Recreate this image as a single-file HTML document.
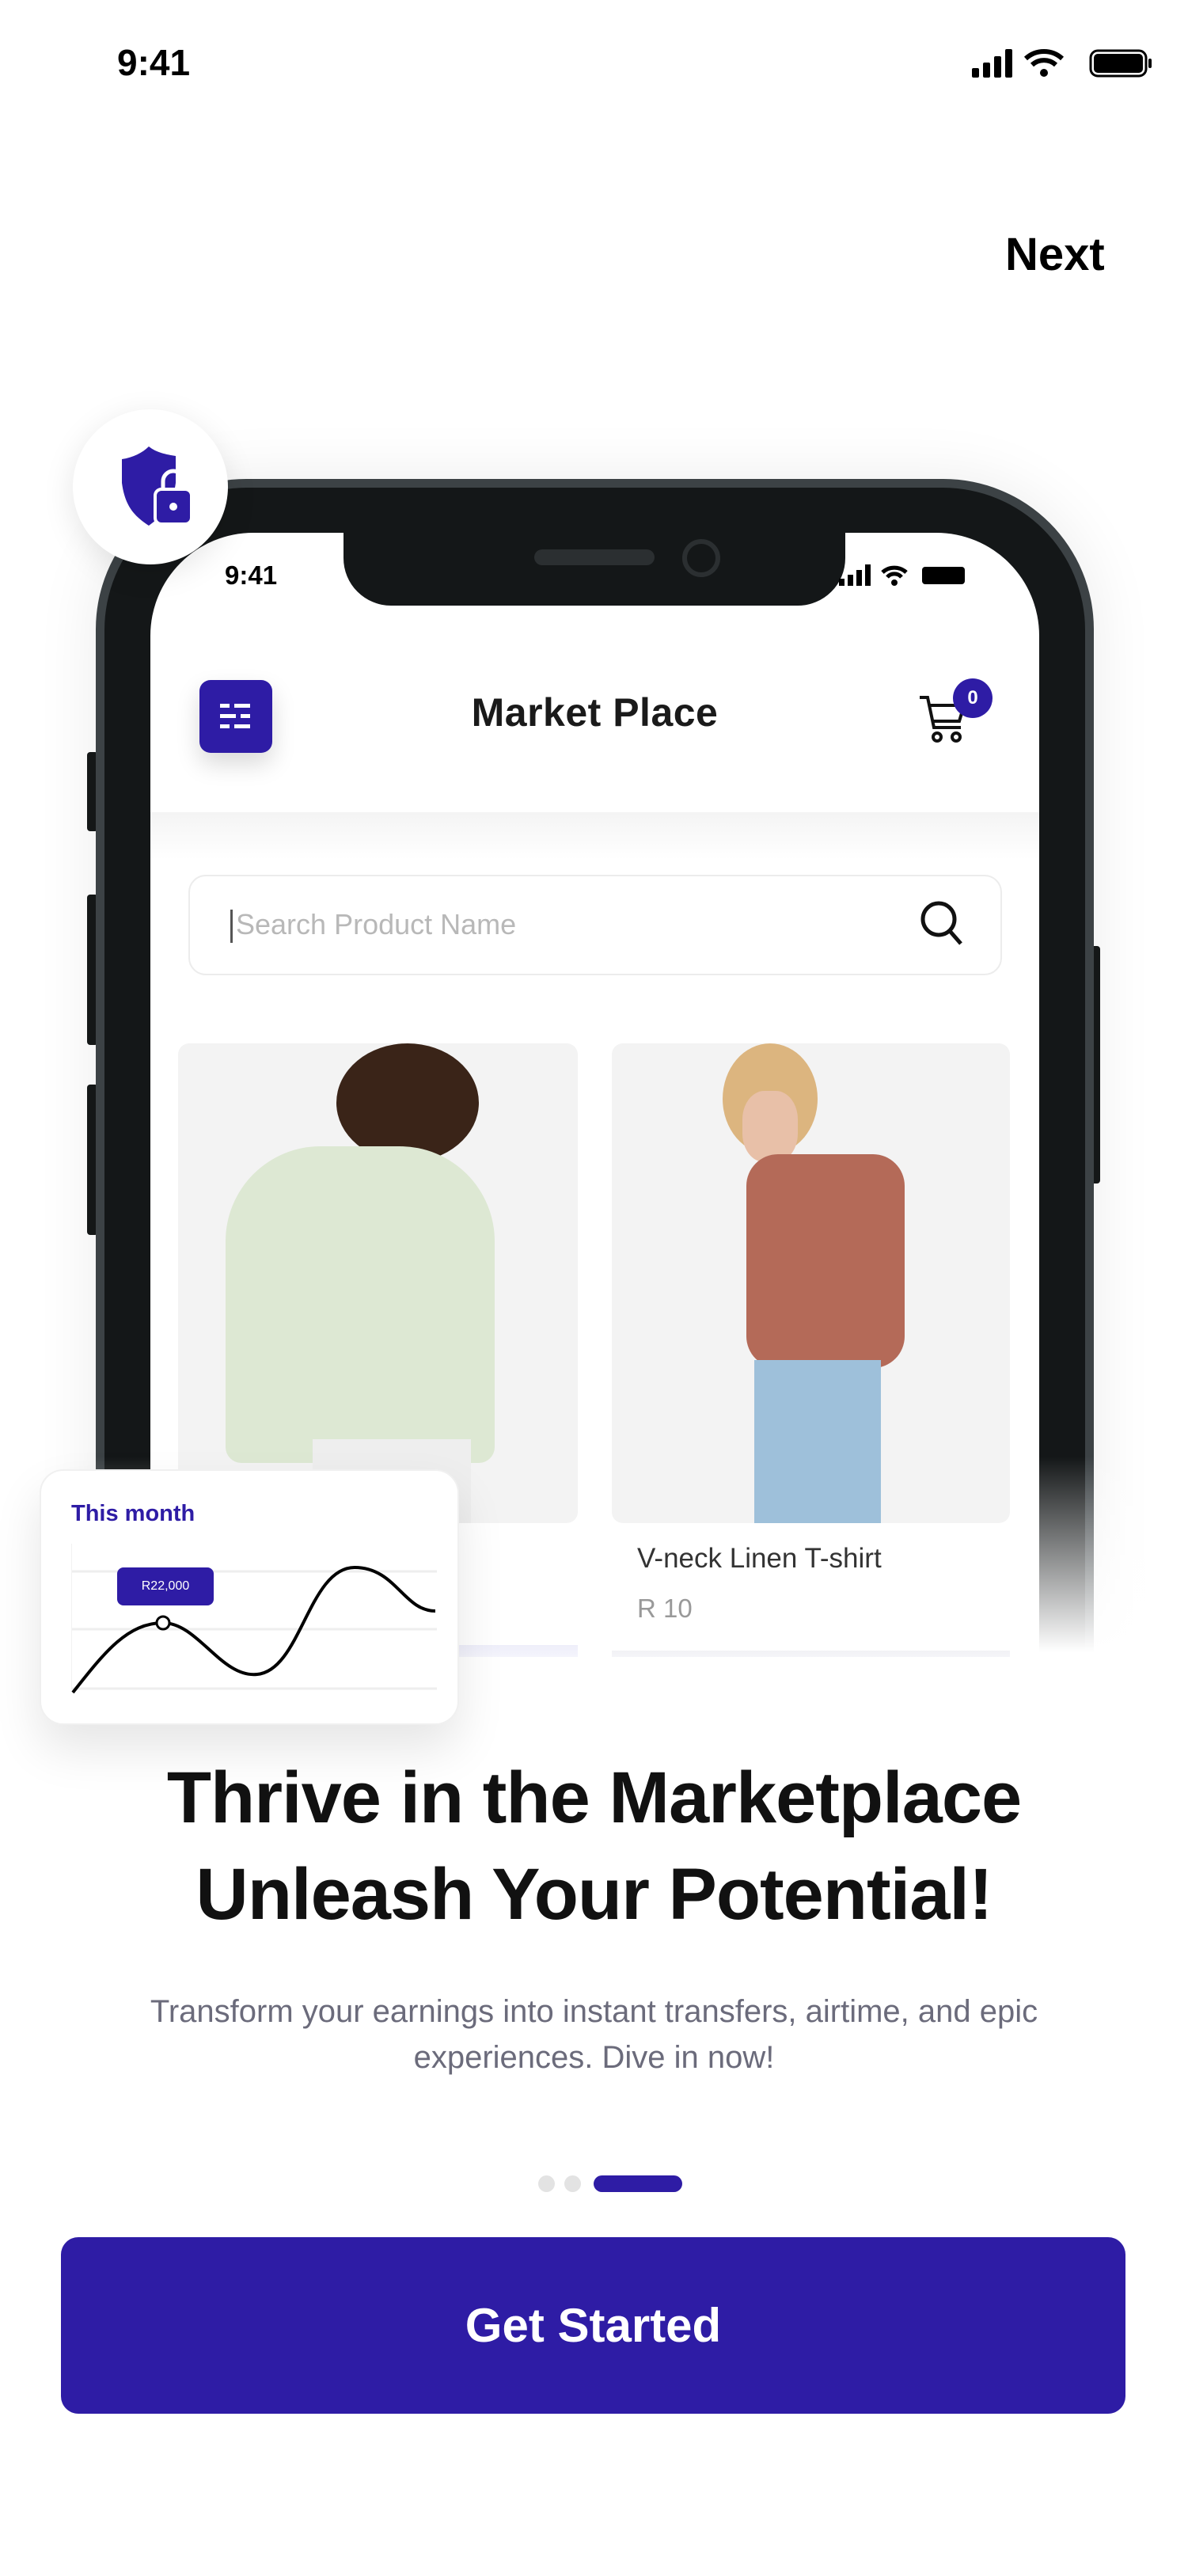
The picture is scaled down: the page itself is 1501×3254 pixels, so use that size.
<!DOCTYPE html>
<html><head><meta charset="utf-8">
<style>
*{margin:0;padding:0;box-sizing:border-box}
body{width:1501px;height:3254px;background:#fff;position:relative;overflow:hidden;font-family:"Liberation Sans",sans-serif}
.abs{position:absolute}
</style></head><body>
<!-- status bar -->
<div class="abs" style="left:148px;top:52px;font-size:46px;font-weight:bold;color:#000">9:41</div>
<svg class="abs" style="left:1228px;top:58px" width="236" height="44" viewBox="0 0 236 44">
<rect x="0" y="28" width="9" height="12" rx="2"/><rect x="14" y="21" width="9" height="19" rx="2"/><rect x="28" y="13" width="9" height="27" rx="2"/><rect x="42" y="4" width="9" height="36" rx="2"/>
<path d="M68 16 a34 34 0 0 1 46 0" stroke="#000" stroke-width="6" fill="none"/><path d="M76 24 a22 22 0 0 1 30 0" stroke="#000" stroke-width="6" fill="none"/><circle cx="91" cy="34" r="5"/>
<rect x="150" y="6" width="70" height="32" rx="9" stroke="#000" stroke-width="3" fill="none"/><rect x="154" y="10" width="62" height="24" rx="5"/><rect x="223" y="16" width="4" height="12" rx="2"/>
</svg>
<div class="abs" style="left:1270px;top:288px;font-size:58px;font-weight:bold;color:#000">Next</div>

<!-- phone -->
<div class="abs" style="left:110px;top:950px;width:14px;height:100px;background:#151818;border-radius:4px"></div>
<div class="abs" style="left:110px;top:1130px;width:14px;height:190px;background:#151818;border-radius:4px"></div>
<div class="abs" style="left:110px;top:1370px;width:14px;height:190px;background:#151818;border-radius:4px"></div>
<div class="abs" style="left:1376px;top:1195px;width:14px;height:300px;background:#151818;border-radius:4px"></div>
<div class="abs" style="left:121px;top:605px;width:1261px;height:1700px;background:#3c4245;border-radius:190px 190px 0 0;box-shadow:0 0 80px rgba(0,0,0,0.08)"></div>
<div class="abs" style="left:132px;top:616px;width:1239px;height:1700px;background:#141718;border-radius:180px 180px 0 0"></div>
<!-- bezel fade -->
<div class="abs" style="left:60px;top:1840px;width:1400px;height:260px;background:linear-gradient(rgba(255,255,255,0),#fff 95%)"></div>
<div class="abs" style="left:0;top:2095px;width:1501px;height:300px;background:#fff"></div>
<div class="abs" style="left:190px;top:673px;width:1123px;height:1420px;background:#fff;border-radius:130px 130px 0 0;overflow:hidden">
  <div class="abs" style="left:244px;top:-10px;width:634px;height:102px;background:#141718;border-radius:0 0 60px 60px"></div>
  <div class="abs" style="left:485px;top:21px;width:152px;height:20px;background:#2b2f31;border-radius:10px"></div>
  <div class="abs" style="left:672px;top:8px;width:48px;height:48px;border:6px solid #2b2f31;border-radius:50%"></div>
  <div class="abs" style="left:94px;top:35px;font-size:33px;font-weight:bold;color:#000">9:41</div>
  <svg class="abs" style="left:870px;top:40px" width="170" height="30" viewBox="0 0 170 30"><rect x="0" y="18" width="7" height="9"/><rect x="11" y="13" width="7" height="14"/><rect x="22" y="7" width="7" height="20"/><rect x="33" y="0" width="7" height="27"/>
  <path d="M55 10 a22 22 0 0 1 30 0" stroke="#000" stroke-width="5" fill="none"/><path d="M61 16 a12 12 0 0 1 18 0" stroke="#000" stroke-width="5" fill="none"/><circle cx="70" cy="23" r="4"/>
  <rect x="105" y="3" width="54" height="22" rx="4"/></svg>
  <!-- header -->
  <div class="abs" style="left:62px;top:186px;width:92px;height:92px;background:#2e1ca5;border-radius:14px;box-shadow:0 14px 30px rgba(0,0,0,0.15)"></div>
  <svg class="abs" style="left:88px;top:214px" width="40" height="36"><rect x="0" y="2" width="12" height="5" fill="#fff"/><rect x="18" y="2" width="20" height="5" fill="#fff"/><rect x="0" y="15" width="20" height="5" fill="#fff"/><rect x="26" y="15" width="12" height="5" fill="#fff"/><rect x="0" y="28" width="12" height="5" fill="#fff"/><rect x="18" y="28" width="20" height="5" fill="#fff"/></svg>
  <div class="abs" style="left:0;width:1123px;top:198px;text-align:center;font-size:50px;font-weight:bold;color:#1a1a1a;letter-spacing:0.5px">Market Place</div>
  <svg class="abs" style="left:970px;top:200px" width="70" height="70" viewBox="0 0 70 70" fill="none" stroke="#111" stroke-width="4"><path d="M2 8 h10 l8 38 h34"/><path d="M14 18 h44 l-6 20 h-34"/><circle cx="24" cy="58" r="5"/><circle cx="48" cy="58" r="5"/></svg>
  <div class="abs" style="left:1014px;top:184px;width:50px;height:50px;background:#2e1ca5;border-radius:50%;color:#fff;font-size:24px;font-weight:bold;text-align:center;line-height:50px">0</div>
  <div class="abs" style="left:0;top:353px;width:1123px;height:60px;background:linear-gradient(#f4f4f4,#fff)"></div>
  <!-- search -->
  <div class="abs" style="left:48px;top:432px;width:1028px;height:127px;border:2px solid #ececec;border-radius:22px"></div>
  <div class="abs" style="left:101px;top:476px;width:3px;height:42px;background:#555"></div>
  <div class="abs" style="left:108px;top:474px;font-size:36px;color:#b8b8b8">Search Product Name</div>
  <svg class="abs" style="left:970px;top:462px" width="60" height="64" fill="none" stroke="#111" stroke-width="5"><circle cx="26" cy="26" r="20"/><path d="M40 41 l14 16"/></svg>
  <!-- cards -->
  <div class="abs" style="left:35px;top:645px;width:505px;height:606px;background:#f3f3f3;border-radius:14px;overflow:hidden">
    <div class="abs" style="left:200px;top:0;width:180px;height:150px;background:#3a2418;border-radius:50%"></div>
    <div class="abs" style="left:60px;top:130px;width:340px;height:400px;background:#dde8d3;border-radius:120px 120px 20px 20px"></div>
    <div class="abs" style="left:170px;top:500px;width:200px;height:120px;background:#eee"></div>
  </div>
  <div class="abs" style="left:583px;top:645px;width:503px;height:606px;background:#f3f3f3;border-radius:14px;overflow:hidden">
    <div class="abs" style="left:140px;top:0;width:120px;height:140px;background:#dcb57f;border-radius:50%"></div>
    <div class="abs" style="left:165px;top:60px;width:70px;height:90px;background:#e8c0a8;border-radius:40%"></div>
    <div class="abs" style="left:170px;top:140px;width:200px;height:270px;background:#b46a58;border-radius:40px"></div>
    <div class="abs" style="left:180px;top:400px;width:160px;height:210px;background:#9ec0da"></div>
  </div>
  <div class="abs" style="left:615px;top:1276px;font-size:35px;color:#333">V-neck Linen T-shirt</div>
  <div class="abs" style="left:615px;top:1340px;font-size:33px;color:#999">R 10</div>
  <div class="abs" style="left:35px;top:1405px;width:505px;height:40px;background:linear-gradient(#eeeefa,#fff)"></div>
  <div class="abs" style="left:583px;top:1412px;width:503px;height:40px;background:linear-gradient(#f2f2f6,#fff)"></div>
</div>

<!-- shield -->
<div class="abs" style="left:92px;top:517px;width:196px;height:196px;background:#fff;border-radius:50%;box-shadow:0 10px 40px rgba(0,0,0,0.10)"></div>
<svg class="abs" style="left:140px;top:560px" width="110" height="110" viewBox="0 0 110 110">
<path d="M48 4 C58 12 70 14 82 16 V50 C78 80 64 92 48 104 C30 92 18 80 14 50 V20 C28 18 40 12 48 4Z" fill="#2e1ca5"/>
<rect x="56" y="58" width="46" height="44" rx="8" fill="#2e1ca5" stroke="#fff" stroke-width="4"/>
<path d="M66 60 V48 a13 13 0 0 1 26 0 V60" fill="none" stroke="#fff" stroke-width="5"/>
<circle cx="79" cy="80" r="5" fill="#fff"/>
</svg>

<!-- chart card -->
<div class="abs" style="left:50px;top:1856px;width:530px;height:323px;background:#fff;border-radius:30px;border:2px solid #f0f0f0;box-shadow:0 30px 60px rgba(0,0,0,0.10)"></div>
<div class="abs" style="left:90px;top:1896px;font-size:29px;font-weight:bold;color:#2e1ca5">This month</div>
<svg class="abs" style="left:90px;top:1940px" width="470" height="220" viewBox="0 0 470 220">
<line x1="0" y1="45" x2="462" y2="45" stroke="#eee" stroke-width="3"/><line x1="0" y1="118" x2="462" y2="118" stroke="#eee" stroke-width="3"/><line x1="0" y1="193" x2="462" y2="193" stroke="#eee" stroke-width="3"/>
<line x1="0" y1="10" x2="0" y2="193" stroke="#f2f2f2" stroke-width="2"/>
<path d="M2 198 C40 150 70 110 116 110 C160 110 190 180 235 175 C290 170 300 40 358 40 C410 40 420 95 460 95" stroke="#000" stroke-width="4" fill="none"/>
<circle cx="116" cy="110" r="8" fill="#fff" stroke="#000" stroke-width="3"/>
</svg>
<div class="abs" style="left:148px;top:1980px;width:122px;height:48px;background:#2e1ca5;border-radius:8px;color:#fff;font-size:16px;text-align:center;line-height:48px">R22,000</div>

<!-- text -->
<div class="abs" style="left:0;top:2210px;width:1501px;text-align:center;font-size:92px;font-weight:bold;color:#111;line-height:122px;letter-spacing:-1px">Thrive in the Marketplace<br>Unleash Your Potential!</div>
<div class="abs" style="left:0;top:2512px;width:1501px;text-align:center;font-size:40px;color:#6b6b7b;line-height:58px">Transform your earnings into instant transfers, airtime, and epic<br>experiences. Dive in now!</div>
<div class="abs" style="left:680px;top:2748px;width:21px;height:21px;background:#e3e3e3;border-radius:50%"></div>
<div class="abs" style="left:713px;top:2748px;width:21px;height:21px;background:#e3e3e3;border-radius:50%"></div>
<div class="abs" style="left:750px;top:2748px;width:112px;height:21px;background:#2e1ca5;border-radius:11px"></div>
<div class="abs" style="left:77px;top:2826px;width:1345px;height:223px;background:#2e1ca5;border-radius:22px;color:#fff;font-size:60px;font-weight:bold;text-align:center;line-height:223px">Get Started</div>
</body></html>
